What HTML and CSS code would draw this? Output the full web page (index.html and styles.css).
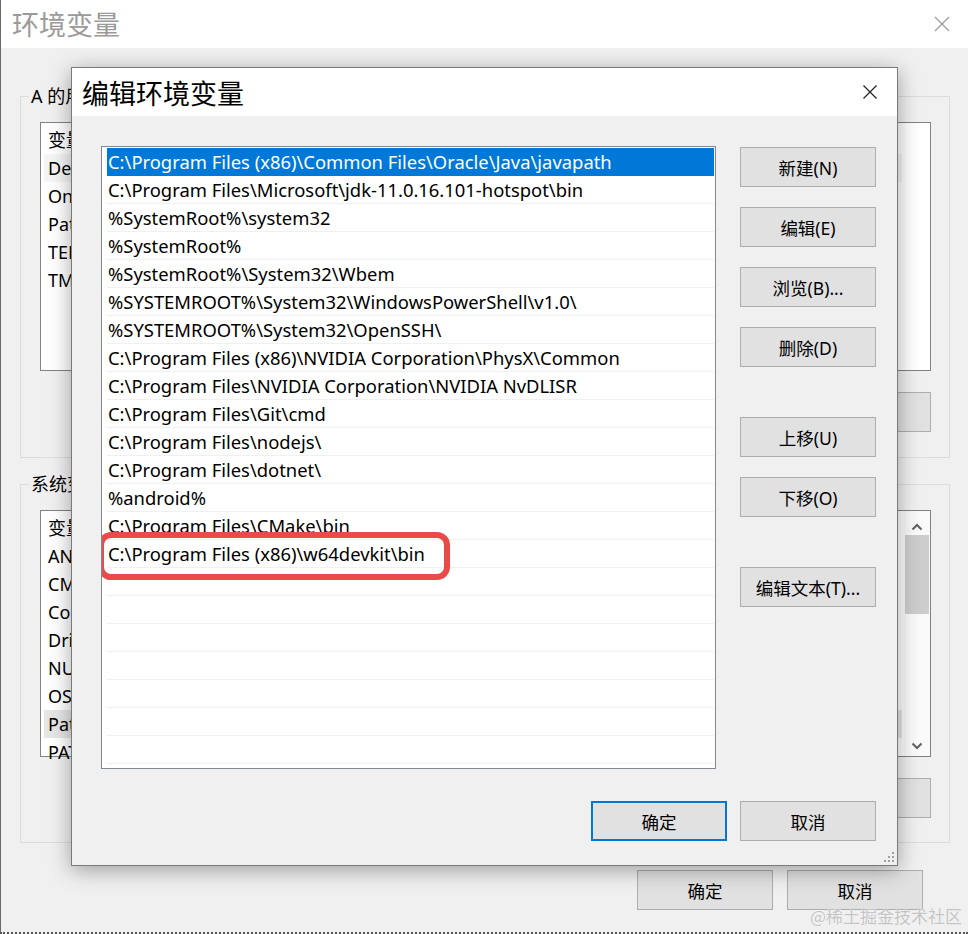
FILE: index.html
```html
<!DOCTYPE html>
<html lang="zh-CN">
<head>
<meta charset="utf-8">
<title>环境变量</title>
<link rel="stylesheet" href="styles.css">
</head>
<body>
<div class="bgwin">
  <div class="bg-title">
    <span class="bg-title-text">环境变量</span>
    <svg class="bg-close" width="16" height="16" viewBox="0 0 16 16"><path d="M1 1L15 15M15 1L1 15" stroke="#9a9a9a" stroke-width="1.2" fill="none"/></svg>
  </div>
  <div class="bg-body">
    <div class="group group-user">
      <div class="legend">A 的用户变量</div>
      <div class="bg-list list-user">
        <div class="bg-row head">变量</div>
        <div class="bg-row soft">DevEco Studio</div>
        <div class="bg-row">OneDrive</div>
        <div class="bg-row">Path</div>
        <div class="bg-row">TEMP</div>
        <div class="bg-row">TMP</div>
      </div>
      <div class="bg-btns"><div class="btn">编辑(I)...</div></div>
    </div>
    <div class="group group-sys">
      <div class="legend">系统变量(S)</div>
      <div class="bg-list list-sys">
        <div class="bg-rows">
          <div class="bg-row head">变量</div>
          <div class="bg-row">ANDROID_HOME</div>
          <div class="bg-row">CMAKE_HOME</div>
          <div class="bg-row">ComSpec</div>
          <div class="bg-row">DriverData</div>
          <div class="bg-row">NUMBER_OF_PROCESSORS</div>
          <div class="bg-row">OS</div>
          <div class="bg-row sel-grey">Path</div>
          <div class="bg-row">PATHEXT</div>
        </div>
        <div class="vscroll">
          <svg class="arrow" width="12" height="8" viewBox="0 0 12 8"><path d="M1.5 6.5L6 2L10.5 6.5" stroke="#606060" stroke-width="2" fill="none"/></svg>
          <div class="thumb"></div>
          <div class="track"></div>
          <svg class="arrow" width="12" height="8" viewBox="0 0 12 8"><path d="M1.5 1.5L6 6L10.5 1.5" stroke="#606060" stroke-width="2" fill="none"/></svg>
        </div>
      </div>
      <div class="bg-btns"><div class="btn">删除(L)</div></div>
    </div>
    <div class="bg-footer">
      <div class="btn">确定</div>
      <div class="btn">取消</div>
    </div>
  </div>
  <div class="watermark">@稀土掘金技术社区</div>

  <div class="dlg">
    <div class="dlg-title">
      <span class="dlg-title-text">编辑环境变量</span>
      <svg class="dlg-close" width="16" height="16" viewBox="0 0 16 16"><path d="M1.5 1.5L14.5 14.5M14.5 1.5L1.5 14.5" stroke="#222" stroke-width="1.2" fill="none"/></svg>
    </div>
    <div class="dlg-body">
      <div class="dlg-main">
        <div class="plist">
          <div class="prow sel">C:\Program Files (x86)\Common Files\Oracle\Java\javapath</div>
          <div class="prow">C:\Program Files\Microsoft\jdk-11.0.16.101-hotspot\bin</div>
          <div class="prow">%SystemRoot%\system32</div>
          <div class="prow">%SystemRoot%</div>
          <div class="prow">%SystemRoot%\System32\Wbem</div>
          <div class="prow">%SYSTEMROOT%\System32\WindowsPowerShell\v1.0\</div>
          <div class="prow">%SYSTEMROOT%\System32\OpenSSH\</div>
          <div class="prow">C:\Program Files (x86)\NVIDIA Corporation\PhysX\Common</div>
          <div class="prow">C:\Program Files\NVIDIA Corporation\NVIDIA NvDLISR</div>
          <div class="prow">C:\Program Files\Git\cmd</div>
          <div class="prow">C:\Program Files\nodejs\</div>
          <div class="prow">C:\Program Files\dotnet\</div>
          <div class="prow">%android%</div>
          <div class="prow">C:\Program Files\CMake\bin</div>
          <div class="prow">C:\Program Files (x86)\w64devkit\bin</div>
          <div class="prow"></div>
          <div class="prow"></div>
          <div class="prow"></div>
          <div class="prow"></div>
          <div class="prow"></div>
          <div class="prow"></div>
          <div class="prow last"></div>
          <div class="redbox"></div>
        </div>
        <div class="side-btns">
          <div class="btn">新建(N)</div>
          <div class="btn">编辑(E)</div>
          <div class="btn">浏览(B)...</div>
          <div class="btn">删除(D)</div>
          <div class="btn gap">上移(U)</div>
          <div class="btn">下移(O)</div>
          <div class="btn gap">编辑文本(T)...</div>
        </div>
      </div>
      <div class="dlg-footer">
        <div class="btn default">确定</div>
        <div class="btn">取消</div>
      </div>
    </div>
    <svg class="grip" width="12" height="12" viewBox="0 0 12 12">
      <rect x="9" y="1" width="2" height="2" fill="#a0a0a0"/>
      <rect x="5" y="5" width="2" height="2" fill="#a0a0a0"/>
      <rect x="9" y="5" width="2" height="2" fill="#a0a0a0"/>
      <rect x="1" y="9" width="2" height="2" fill="#a0a0a0"/>
      <rect x="5" y="9" width="2" height="2" fill="#a0a0a0"/>
      <rect x="9" y="9" width="2" height="2" fill="#a0a0a0"/>
    </svg>
  </div>
</div>
</body>
</html>
```

FILE: styles.css
```css
* { box-sizing: border-box; }
html, body { margin: 0; padding: 0; }
body {
  width: 968px;
  height: 934px;
  overflow: hidden;
  font-family: "Noto Sans", "Noto Sans CJK SC", sans-serif;
  font-size: 18px;
  color: #000;
  background: #f0f0f0;
}
.bgwin {
  position: relative;
  width: 968px;
  height: 934px;
  background: #f0f0f0;
  border-left: 1px solid #6a6a6a;
  border-bottom: 2px dotted #555;
  overflow: hidden;
}
.bg-title {
  height: 48px;
  background: #fff;
  display: flex;
  align-items: center;
  justify-content: space-between;
  padding: 0 18px 0 11px;
}
.bg-title-text {
  font-family: "Noto Sans CJK SC", sans-serif;
  font-size: 27px;
  color: #9a9a9a;
  line-height: 48px;
}
.bg-body {
  padding: 48px 18px 0 19px;
  display: flex;
  flex-direction: column;
}
.group {
  border: 1px solid #dcdcdc;
  padding: 0 18px 0 19px;
  display: flex;
  flex-direction: column;
}
.group-user { height: 362px; }
.group-sys { height: 359px; margin-top: 26px; }
.legend {
  margin: -13px 0 0 -11px;
  padding: 0 2px;
  width: fit-content;
  background: #f0f0f0;
  line-height: 24px;
  font-family: "Noto Sans", "Noto Sans CJK SC", sans-serif;
}
.bg-list {
  background: #fff;
  border: 1px solid #828282;
  margin-top: 14px;
  padding: 3px 0 0 3px;
}
.list-user { height: 249px; }
.list-sys { height: 247px; display: flex; padding-right: 0; }
.bg-rows { flex: 1; }
.bg-row {
  height: 28px;
  line-height: 28px;
  padding-left: 4px;
  white-space: nowrap;
}
.bg-row.soft { background: #f5f5f5; width: 858px; }
.bg-row.sel-grey { background: #e6e6e6; width: 858px; }
.vscroll {
  width: 26px;
  display: flex;
  flex-direction: column;
  align-items: center;
  padding: 12px 0 6px;
  margin-top: -3px;
  background: #fafafa;
}
.vscroll .arrow { flex: none; }
.vscroll .thumb {
  width: 24px;
  height: 79px;
  margin-top: 4px;
  background: #cdcdcd;
}
.vscroll .track { flex: 1; }
.bg-btns {
  display: flex;
  justify-content: flex-end;
  margin-top: 21px;
}
.bg-footer {
  display: flex;
  justify-content: flex-end;
  gap: 14px;
  margin-top: 27px;
  padding-right: 27px;
}
.btn {
  width: 136px;
  height: 40px;
  background: #e1e1e1;
  border: 1px solid #adadad;
  display: flex;
  align-items: center;
  justify-content: center;
  font-family: "Noto Sans", "Noto Sans CJK SC", sans-serif;
  font-size: 17.5px;
  white-space: nowrap;
}
.watermark {
  position: absolute;
  right: 6px;
  bottom: 4px;
  font-family: "Noto Sans CJK SC", sans-serif;
  font-size: 17px;
  color: #c4c4c4;
  text-shadow: 0 0 1px #fff;
}

/* Foreground dialog */
.dlg {
  position: absolute;
  left: 70px;
  top: 67px;
  width: 827px;
  height: 799px;
  border: 1px solid #7a7a7a;
  background: #f0f0f0;
  box-shadow: 0 4px 20px rgba(0,0,0,0.35);
  display: flex;
  flex-direction: column;
}
.dlg-title {
  height: 48px;
  flex: none;
  background: #fff;
  display: flex;
  align-items: center;
  justify-content: space-between;
  padding: 0 19px 0 10px;
}
.dlg-title-text {
  font-family: "Noto Sans CJK SC", sans-serif;
  font-size: 27px;
  color: #000;
}
.dlg-body {
  padding: 30px 21px 0 29px;
  display: flex;
  flex-direction: column;
}
.dlg-main {
  display: flex;
  gap: 24px;
}
.plist {
  position: relative;
  width: 615px;
  height: 623px;
  background: #fff;
  border: 1px solid #828790;
  padding: 1px 1px 0 5px;
  overflow: hidden;
  font-size: 18.4px;
}
.prow {
  height: 28px;
  line-height: 27px;
  padding-left: 1px;
  border-bottom: 1px solid #f0f0f0;
  white-space: nowrap;
  color: #000;
}
.prow.sel {
  background: #0078d7;
  color: #fff;
  border-bottom-color: #0078d7;
}
.redbox {
  position: absolute;
  left: -4px;
  top: 385px;
  width: 352px;
  height: 48px;
  border: 6px solid #e94b4b;
  border-radius: 13px;
}
.side-btns {
  display: flex;
  flex-direction: column;
  gap: 20px;
  margin-top: 1px;
}
.side-btns .btn.gap { margin-top: 30px; }
.dlg-footer {
  display: flex;
  justify-content: flex-end;
  gap: 13px;
  margin-top: 32px;
}
.btn.default {
  border: 2px solid #0078d7;
}
.grip {
  position: absolute;
  right: 2px;
  bottom: 2px;
}
```
